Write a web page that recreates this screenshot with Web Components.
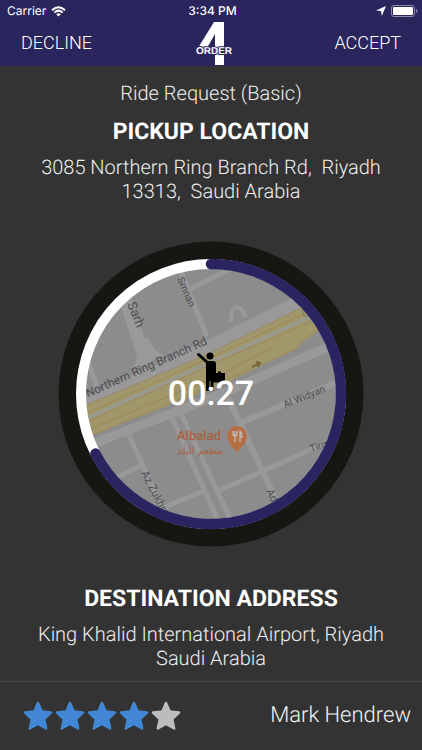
<!DOCTYPE html>
<html lang="en">
<head>
<meta charset="utf-8">
<meta name="viewport" content="width=device-width, initial-scale=1">
<title>Ride Request</title>
<style>
body { margin: 0; background: #333333; color: #fff; font-family: Roboto, "Liberation Sans", sans-serif; text-rendering: geometricPrecision; }
</style>
</head>
<body>
<ride-app></ride-app>
<script>
function define(name, html) {
  const template = document.createElement('template');
  template.innerHTML = html;
  customElements.define(name, class extends HTMLElement {
    constructor() {
      super();
      this.attachShadow({ mode: 'open' }).append(template.content.cloneNode(true));
    }
  });
}

define('status-bar', `
<style>
:host { display: grid; grid-template-columns: 1fr auto 1fr; align-items: center; height: 22px; padding: 0 4px 0 7px; font: 400 12px/22px Inter, "Liberation Sans", sans-serif; }
div { display: flex; align-items: center; gap: 5px; }
.time { font-weight: 500; }
.right { justify-content: flex-end; }
svg { display: block; }
</style>
<div><span>Carrier</span>
<svg width="15" height="11" viewBox="0 0 15 11" fill="none" stroke="#fff" stroke-width="2" aria-label="Wi-Fi"><path d="M1 4.2Q7.5-1.8 14 4.2M3.4 6.6Q7.500 2.700 11.600 6.600"/><path d="M7.500 10.500L5.200 8.200Q7.500 6.300 9.800 8.200Z" fill="#fff" stroke="none"/></svg></div>
<span class="time">3:34 PM</span>
<div class="right">
<svg width="10" height="10" viewBox="0 0 10 10" aria-label="Location"><path d="M10 0L5.800 10L5 5L0 4.500Z" fill="#fff"/></svg>
<svg width="27" height="12" viewBox="0 0 27 12" aria-label="Battery"><rect x=".5" y=".5" width="23" height="11" rx="2.500" fill="none" stroke="#8f8cb0"/><rect x="2" y="2" width="20" height="8" rx="1" fill="#fff"/><path d="M25 4Q26.500 4.500 26.500 6T25 8Z" fill="#8f8cb0"/></svg>
</div>`);

define('order-logo', `
<style>:host { display: block; } svg { display: block; }</style>
<svg width="46" height="44" viewBox="188 22 46 44" role="img" aria-label="4 Order">
<path d="M214 22H224V65H215V34L207 48H198Z" fill="#fff"/>
<text x="214" y="54" text-anchor="middle" font-family="Liberation Sans, sans-serif" font-weight="700" font-size="10" fill="#fff" stroke="#2a255c" stroke-width="2" paint-order="stroke" stroke-linejoin="round">ORDER</text>
</svg>`);

define('nav-bar', `
<style>
:host { display: grid; grid-template-columns: 1fr auto 1fr; align-items: start; height: 44px; padding: 0 21px; }
</style>
<slot></slot>`);

define('nav-action', `
<style>
:host { display: block; }
:host([end]) { text-align: right; }
button { border: 0; padding: 8px 0; background: none; color: #fff; font: 300 18px/26px Roboto, sans-serif; cursor: pointer; }
</style>
<button type="button"><slot></slot></button>`);

define('address-block', `
<style>
:host { display: block; text-align: center; }
h2 { margin: 0 0 9px; font-size: 23px; line-height: 28px; font-weight: 700; }
p { margin: 0; font-size: 20px; line-height: 24px; font-weight: 300; color: #eee; white-space: pre-line; }
</style>
<h2><slot name="title"></slot></h2>
<p><slot></slot></p>`);

define('pickup-map', `
<style>:host { display: block; } svg { display: block; width: 100%; height: auto; }</style>
<svg viewBox="58 241 306 306" role="img" aria-label="Pickup map">
<defs><clipPath id="disc"><circle cx="211" cy="394" r="130"/></clipPath></defs>
<circle cx="211" cy="394" r="152.500" fill="#171613"/>
<g clip-path="url(#disc)">
  <rect x="76" y="258" width="270" height="272" fill="#8c8c8c"/>
  <g fill="none" stroke="#999" stroke-width="5">
    <path d="M124 294L146 364" stroke-width="13"/>
    <path d="M138 340Q141 356 132 368L165 356Q154 352 149 338Z" fill="#999" stroke="none"/>
    <path d="M177 262L207 337M188 290L232 268" />
    <path d="M86 356L97 387"/>
    <path d="M231 322L232 312Q236 304 241 309L246 317" stroke-width="4"/>
    <path d="M70 413L210 348L310 298" stroke-width="16"/>
    <path d="M80 449L226 392L350 337" stroke-width="9"/>
    <path d="M160 421Q170 413 174 422L220 525M183 410Q180 414 185 422L233 525"/>
    <path d="M128 433L164 512M108 481L143 465"/>
    <path d="M158 510L206 490M218 491L350 432"/>
    <path d="M228 398L280 508M240 423L350 377" stroke-width="6"/>
  </g>
  <path d="M70 413L215 352L305 306L330 320L314 334L303 342L296 349L228 382L80 440Z" fill="#a0986a"/>
  <path d="M70 426L218 359L312 316" fill="none" stroke="#99998c" stroke-width="4"/>
  <g fill="none" stroke="#a1865a" stroke-width="1">
    <path d="M70 412L215 351L305 306M70 421L216 355L310 311M70 430L216 362L318 319M80 440L226 380L296 349Q300 340 318 330M80 433L218 376L275 346"/>
  </g>
  <path d="M302 309L304 316H309" fill="none" stroke="#78796f"/>
  <path d="M252 367L260 363M256 362L260 363L258 367" fill="none" stroke="#77653d" stroke-width="2"/>
  <g font-family="Roboto, sans-serif" fill="#4c4e53">
    <text transform="translate(208 344) rotate(-24)" text-anchor="end" font-size="12">Northern Ring Branch Rd</text>
    <text transform="translate(127 304) rotate(68)" font-size="13">Sarh</text>
    <text transform="translate(177 279) rotate(66)" font-size="10">Smnan</text>
    <text transform="translate(285 408) rotate(-22)" font-size="10">Al Widyan</text>
    <text transform="translate(311 452) rotate(-19)" font-size="10">Tirmidhi</text>
    <text transform="translate(266 491) rotate(64)" font-size="11">Ad</text>
    <text transform="translate(141 473) rotate(63)" font-size="11">Az Zukhruf</text>
  </g>
  <g fill="#a8623e">
    <text x="177" y="440" font-family="Roboto, sans-serif" font-weight="500" font-size="13">Albalad</text>
    <text x="200" y="454" text-anchor="middle" font-family="DejaVu Sans, sans-serif" font-size="10">مطعم البلد</text>
  </g>
  <path d="M237 454C236 448 227 445 227 436A10 10 0 0 1 247 436C247 445 238 448 237 454Z" fill="#b66f43"/>
  <path d="M233 431V435Q235 437 237 435V431M235 431V442M240 442V431Q242 433 242 437H240" fill="none" stroke="#bcbcbc" stroke-width="1.300"/>
  <circle cx="144" cy="502" r="3" fill="#a94444"/>
</g>
<circle cx="211" cy="394" r="130" fill="none" stroke="#fff" stroke-width="10"/>
<path d="M211 264A130 130 0 1 1 95.500 453.600" fill="none" stroke="#2a2560" stroke-width="10.500" stroke-linecap="round"/>
<g fill="#000">
  <circle cx="210" cy="356" r="3.500"/>
  <path d="M198.500 354.500L207.500 362.500" stroke="#000" stroke-width="3" stroke-linecap="round"/>
  <path d="M206 361H213Q216 361 216 364V373H218V371.500H221V373H225V382.500H213.500V391H210.500V381H209.500V391H206Z"/>
</g>
</svg>`);

define('ride-dial', `
<style>
:host { display: grid; place-items: center; width: 100%; max-width: 306px; }
pickup-map, time { grid-area: 1 / 1; }
pickup-map { width: 100%; }
time { z-index: 1; font-size: 34px; line-height: 40px; font-weight: 500; }
</style>
<pickup-map></pickup-map>
<time><slot></slot></time>`);

define('rating-star', `
<style>:host { display: block; color: #4287d6; } :host([empty]) { color: #bcbcbc; } svg { display: block; }</style>
<svg width="30" height="30" viewBox="0 0 30 30"><path d="M15 2L18.700 10.500L28 11.500L21.200 18L23.200 27.500L15 23L6.800 27.500L8.800 18L2 11.500L11.300 10.500Z" fill="currentColor" stroke="currentColor" stroke-width="2.500" stroke-linejoin="round"/></svg>`);

define('rider-footer', `
<style>
:host { display: flex; justify-content: space-between; align-items: center; height: 68px; padding: 0 11px 0 23px; border-top: 1px solid #484848; }
.stars { display: flex; gap: 2px; }
.name { font-size: 22px; line-height: 28px; font-weight: 300; color: #f4f4f4; }
</style>
<div class="stars" role="img" aria-label="4 out of 5 stars"><rating-star></rating-star><rating-star></rating-star><rating-star></rating-star><rating-star></rating-star><rating-star empty></rating-star></div>
<span class="name"><slot></slot></span>`);

define('ride-app', `
<style>
:host { display: flex; flex-direction: column; min-height: 100vh; }
header { background: #2a255c; }
main { flex: 1; display: flex; flex-direction: column; align-items: center; justify-content: space-between; padding: 14px 16px 11px; }
.top { text-align: center; }
h1 { margin: 0 0 12px; font-size: 20px; line-height: 26px; font-weight: 300; color: #eee; }
</style>
<header>
<status-bar></status-bar>
<nav-bar><nav-action>DECLINE</nav-action><order-logo></order-logo><nav-action end>ACCEPT</nav-action></nav-bar>
</header>
<main>
<div class="top">
<h1>Ride Request (Basic)</h1>
<address-block><span slot="title">PICKUP LOCATION</span>3085 Northern Ring Branch Rd,&nbsp; Riyadh<br>13313,&nbsp; Saudi Arabia</address-block>
</div>
<ride-dial>00:27</ride-dial>
<address-block><span slot="title">DESTINATION ADDRESS</span>King Khalid International Airport, Riyadh<br>Saudi Arabia</address-block>
</main>
<rider-footer>Mark Hendrew</rider-footer>`);
</script>
</body>
</html>
